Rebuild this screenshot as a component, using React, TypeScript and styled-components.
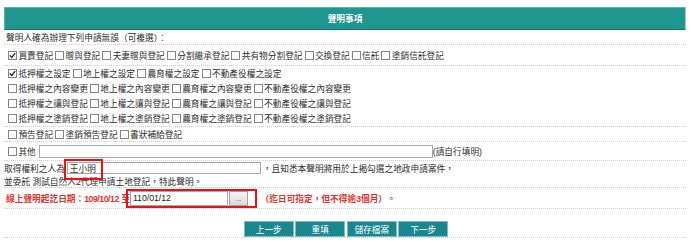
import React from 'react';
import styled, { createGlobalStyle } from 'styled-components';

const Global = createGlobalStyle`
  html, body { margin: 0; padding: 0; background: #fff; }
  body {
    font-family: "Liberation Sans", Arial, "Noto Sans CJK TC", sans-serif;
    font-size: 8.7px;
    color: #2e2e2e;
  }
  * { box-sizing: border-box; }
`;

const Page = styled.div`
  width: 682px;
  margin-left: 4px;
  padding-top: 7px;
`;

const Header = styled.div`
  height: 23px;
  background: #1f968f;
  border: 1px solid #5eb1ac;
  border-bottom-color: #17786f;
  border-right-color: #9fd0d6;
  color: #fff;
  font-weight: bold;
  display: flex;
  align-items: center;
  justify-content: center;
`;

const Row = styled.div<{ $h: number; $pad?: number }>`
  height: ${(p) => p.$h + 1}px;
  border-bottom: 1px dotted #cfcfcf;
  padding-left: ${(p) => p.$pad ?? 2}px;
  display: flex;
  flex-direction: column;
  justify-content: center;
`;

const Line = styled.div<{ $h: number }>`
  height: ${(p) => p.$h}px;
  display: flex;
  align-items: center;
  white-space: nowrap;
`;

const OptLabel = styled.label`
  display: inline-flex;
  align-items: center;
`;

const Box = styled.span`
  width: 9px;
  height: 9px;
  border: 1px solid #858585;
  background: #fff;
  margin: 0 1.4px 0 2px;
  display: inline-flex;
  align-items: center;
  justify-content: center;
  flex: none;
`;

const Option: React.FC<{ label: string; checked?: boolean }> = ({ label, checked }) => (
  <OptLabel>
    <Box>
      {checked && (
        <svg width="7" height="7" viewBox="0 0 7 7">
          <polyline points="0.8,3.4 2.7,5.4 6.2,1.2" fill="none" stroke="#222" strokeWidth="1.3" />
        </svg>
      )}
    </Box>
    {label}
  </OptLabel>
);

const TextInput = styled.input<{ $w: number; $h: number }>`
  width: ${(p) => p.$w}px;
  height: ${(p) => p.$h}px;
  border: 1px solid #a9a9a9;
  padding: 0 2px;
  margin: 0;
  font: inherit;
  color: #333;
  background: #fff;
  outline: none;
`;

const Marked = styled.span`
  position: relative;
  display: inline-flex;
  align-items: center;
`;

const RedBox = styled.span<{ $l: number; $t: number; $w: number; $hh: number }>`
  position: absolute;
  left: ${(p) => p.$l}px;
  top: ${(p) => p.$t}px;
  width: ${(p) => p.$w}px;
  height: ${(p) => p.$hh}px;
  border: 2px solid #f01010;
  pointer-events: none;
`;

const Red = styled.span`
  color: #e8322d;
  font-weight: bold;
`;

const Digits = styled.span`
  letter-spacing: -0.45px;
`;

const DateInput = styled(TextInput)`
  color: #222;
`;

const PickBtn = styled.button`
  width: 19px;
  height: 15px;
  margin: 0 0 0 1px;
  padding: 0;
  border: 1px solid #a3a3a3;
  background: linear-gradient(#f6f6f6, #dadada);
  color: #555;
  font: inherit;
  font-size: 7px;
  line-height: 1;
`;

const ButtonRow = styled.div`
  height: 29px;
  border-bottom: 1px dotted #cfcfcf;
  padding-top: 12px;
  display: flex;
  justify-content: center;
  gap: 1.5px;
  padding-left: 2px;
`;

const ActionBtn = styled.button`
  width: 50px;
  height: 16px;
  margin: 0;
  padding: 0;
  background: #188790;
  border: 1px solid #7dbdc3;
  color: #fff;
  font: inherit;
`;

const Gap = styled.span<{ $w: number }>`
  display: inline-block;
  width: ${(p) => p.$w}px;
`;

export default function App() {
  return (
    <>
      <Global />
      <Page>
        <Header>聲明事項</Header>
        <Row $h={14}>
          <Line $h={14}>聲明人確為辦理下列申請無誤（可複選）：</Line>
        </Row>
        <Row $h={20}>
          <Line $h={15}>
            <Option label="買賣登記" checked />
            <Option label="贈與登記" />
            <Option label="夫妻贈與登記" />
            <Option label="分割繼承登記" />
            <Option label="共有物分割登記" />
            <Option label="交換登記" />
            <Option label="信託" />
            <Option label="塗銷信託登記" />
          </Line>
        </Row>
        <Row $h={60}>
          <Line $h={15}>
            <Option label="抵押權之設定" checked />
            <Option label="地上權之設定" />
            <Option label="農育權之設定" />
            <Option label="不動產役權之設定" />
          </Line>
          <Line $h={15}>
            <Option label="抵押權之內容變更" />
            <Option label="地上權之內容變更" />
            <Option label="農育權之內容變更" />
            <Option label="不動產役權之內容變更" />
          </Line>
          <Line $h={15}>
            <Option label="抵押權之讓與登記" />
            <Option label="地上權之讓與登記" />
            <Option label="農育權之讓與登記" />
            <Option label="不動產役權之讓與登記" />
          </Line>
          <Line $h={15}>
            <Option label="抵押權之塗銷登記" />
            <Option label="地上權之塗銷登記" />
            <Option label="農育權之塗銷登記" />
            <Option label="不動產役權之塗銷登記" />
          </Line>
        </Row>
        <Row $h={14}>
          <Line $h={14}>
            <Option label="預告登記" />
            <Option label="塗銷預告登記" />
            <Option label="書狀補給登記" />
          </Line>
        </Row>
        <Row $h={18}>
          <Line $h={18}>
            <Option label="其他" />
            <Gap $w={3} />
            <TextInput $w={394} $h={13} defaultValue="" />
            (請自行填明)
          </Line>
        </Row>
        <Row $h={26} $pad={0}>
          <Line $h={14}>
            取得權利之人為
            <Gap $w={2} />
            <Marked>
              <TextInput $w={194} $h={12} defaultValue="王小明" />
              <RedBox $l={-3} $t={-3} $w={39} $hh={21} />
            </Marked>
            <Gap $w={2} />
            ，且知悉本聲明將用於上揭勾選之地政申請案件，
          </Line>
          <Line $h={12}>並委託 測試自然人2代理申請土地登記，特此聲明。</Line>
        </Row>
        <Row $h={20}>
          <Line $h={20}>
            <Red>
              線上聲明起訖日期：<Digits>109/10/12</Digits> 至
            </Red>
            <Marked>
              <DateInput $w={98} $h={15} defaultValue="110/01/12" />
              <PickBtn>...</PickBtn>
              <RedBox $l={-4} $t={-2} $w={131} $hh={19} />
            </Marked>
            <Gap $w={4} />
            <Red>，（迄日可指定，但不得逾3個月）。</Red>
          </Line>
        </Row>
        <ButtonRow>
          <ActionBtn>上一步</ActionBtn>
          <ActionBtn>重填</ActionBtn>
          <ActionBtn>儲存檔案</ActionBtn>
          <ActionBtn>下一步</ActionBtn>
        </ButtonRow>
      </Page>
    </>
  );
}
